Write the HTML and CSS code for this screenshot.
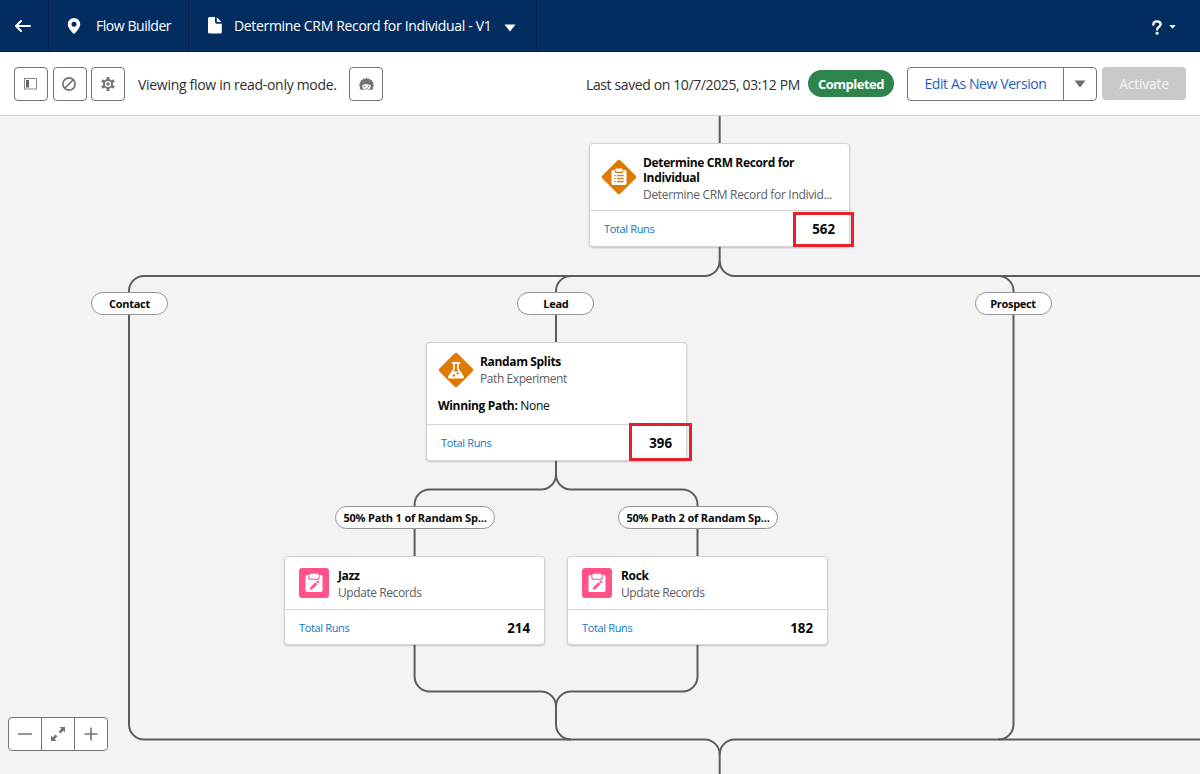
FILE: index.html
```html
<!DOCTYPE html>
<html lang="en">
<head>
    <meta charset="UTF-8">
    <meta name="viewport" content="width=device-width, initial-scale=1.0">
    <title>Flow Builder</title>
    <link rel="stylesheet" href="styles.css">
</head>
<body>
    <!-- shared icons -->
    <svg class="sprite" width="0" height="0">
        <symbol id="update-icon" viewBox="0 0 30 30">
            <rect width="30" height="30" rx="3" fill="#ff538a"/>
            <path d="M8 7h1.300v2.200q0 2.600 2.600 2.600h6.200q2.600 0 2.600-2.600V7H22q1.500 0 1.500 1.500v14q0 1.500-1.500 1.500H8q-1.500 0-1.500-1.500v-14Q6.500 7 8 7z" fill="#fff"/>
            <rect x="10.300" y="5.700" width="9.400" height="5" rx="1.600" fill="#fff"/>
            <path d="M10.700 22l.8-2.900 5-4.800 1.900 1.900-5 4.900zM17.200 13.600l1-1q.6-.4 1.100.1l.7.7q.5.500 0 1.100l-1 1z" fill="#ff538a"/>
        </symbol>
    </svg>

    <header class="topbar">
        <a class="topbar-item back">
            <svg width="18" height="14" viewBox="0 0 18 14" fill="none" stroke="#fff" stroke-width="2" stroke-linecap="round" stroke-linejoin="round"><path d="M16 7H2M7 2L2 7l5 5"/></svg>
        </a>
        <a class="topbar-item builder">
            <svg width="14" height="18" viewBox="0 0 14 18"><path fill="#fff" fill-rule="evenodd" d="M7 1a6.200 6.200 0 0 0-6.200 6.200c0 3.300 3.300 6.800 5.300 9.100q.9 1 1.800 0c2-2.300 5.300-5.800 5.300-9.100A6.200 6.200 0 0 0 7 1zm0 3.800a2.500 2.500 0 1 1 0 5 2.500 2.500 0 0 1 0-5z"/></svg>
            <span class="builder-name">Flow Builder</span>
        </a>
        <a class="topbar-item flow">
            <svg width="14" height="17" viewBox="0 0 14 17" fill="#fff"><path d="M1.500 0H7v5q0 1.800 1.800 1.800h5V15q0 1.500-1.500 1.500H1.500Q0 16.500 0 15V1.500Q0 0 1.500 0z"/><path d="M8.800.3l4.700 4.800H9.300q-.5 0-.5-.5z"/></svg>
            <span class="flow-name">Determine CRM Record for Individual - V1</span>
            <svg class="flow-arrow" width="12" height="8" viewBox="0 0 12 8"><path fill="#fff" d="M.5.500h11L6 7.500z"/></svg>
        </a>
        <a class="help">
            <svg width="10" height="15" viewBox="0 0 10 15"><path d="M1.300 4.700Q1.300 1.300 4.900 1.300q3.700 0 3.700 3 0 1.700-1.800 2.800Q5.100 8.100 5.100 9.700" fill="none" stroke="#fff" stroke-width="2.300" stroke-linecap="round"/><circle cx="5.100" cy="13.300" r="1.500" fill="#fff"/></svg>
            <svg width="7" height="4" viewBox="0 0 7 4"><path fill="#fff" d="M.3 0h6.400L3.500 3.800z"/></svg>
        </a>
    </header>

    <div class="toolbar">
        <div class="tools">
            <button class="btn icon-btn">
                <svg width="14" height="12" viewBox="0 0 14 12"><rect x=".5" y=".5" width="12" height="10.500" fill="none" stroke="#8a8a8a"/><path d="M2 2h3v7.500H2z" fill="#666"/></svg>
            </button>
            <button class="btn icon-btn">
                <svg width="14" height="14" viewBox="0 0 14 14" fill="none" stroke="#747474" stroke-width="1.700"><circle cx="7" cy="7" r="6.100"/><path d="M3 11l8-8"/></svg>
            </button>
            <button class="btn icon-btn">
                <svg width="14" height="14" viewBox="0 0 14 14"><g fill="none" stroke="#747474"><circle cx="7" cy="7" r="4.100" stroke-width="2"/><path stroke-width="2.800" d="M7 0v2.500M7 11.500V14M.9 3.500l2.200 1.250M10.900 9.250l2.200 1.250M.9 10.500l2.200-1.250M10.900 4.750l2.200-1.250"/></g><circle cx="7" cy="7" r="1.700" fill="#747474"/></svg>
            </button>
        </div>
        <span class="mode">Viewing flow in read-only mode.</span>
        <button class="btn icon-btn">
            <svg width="15" height="15" viewBox="0 0 14 14"><path fill="#747474" d="M1.700 12.800L.5 11.500l.6-1.200L0 9l.8-1.300L.4 6.300l1.200-.9.1-1.500 1.600-.2.7-1.400 1.500.4L7 1.700l1.500 1 1.500-.4.7 1.400 1.600.2.100 1.500 1.200.9-.4 1.400.8 1.300-1.100 1.300.6 1.200-1.200 1.300z"/><path fill="#fff" d="M3.200 8.700q1.700-.3 2.500-1.500 1.800 1 5.100 1.100v2q-.4 2.500-3.800 2.500t-3.800-2.500z"/><circle cx="5.200" cy="9.700" r=".7" fill="#747474"/><circle cx="8.800" cy="9.700" r=".7" fill="#747474"/><path d="M5.600 11.200q1.400 1 2.800 0" fill="none" stroke="#747474" stroke-width=".7"/></svg>
        </button>
        <div class="actions">
            <span class="saved">Last saved on 10/7/2025, 03:12 PM</span>
            <span class="status">Completed</span>
            <div class="btn-group">
                <button class="btn edit">Edit As New Version</button>
                <button class="btn more">
                    <svg width="12" height="8" viewBox="0 0 12 8"><path fill="#706e6b" d="M.5.500h11L6 7.500z"/></svg>
                </button>
            </div>
            <button class="activate" disabled>Activate</button>
        </div>
    </div>

    <main class="canvas">
        <!-- connectors -->
        <svg class="lines" width="1200" height="658" viewBox="0 116 1200 658">
            <path d="M719.700 116V143"/>
            <path d="M719.700 247V261a15 15 0 0 1-15 15H144a15 15 0 0 0-15 15V724.500a15 15 0 0 0 15 15H704.700a15 15 0 0 1 15 15V774"/>
            <path d="M719.700 261a15 15 0 0 0 15 15H1200M1200 739.500H734.700a15 15 0 0 0-15 15"/>
            <path d="M571 276a15 15 0 0 0-15 15V343"/>
            <path d="M998.500 276a15 15 0 0 1 15 15V724.500a15 15 0 0 1-15 15"/>
            <path d="M556 461V475a15 15 0 0 1-15 14.500H429.600a15 15 0 0 0-15 15V676.500a15 15 0 0 0 15 15H541a15 15 0 0 1 15 15V724.500a15 15 0 0 0 15 15"/>
            <path d="M556 475a15 15 0 0 0 15 14.500H682.500a15 15 0 0 1 15 15V676.500a15 15 0 0 1-15 15H571a15 15 0 0 0-15 15"/>
        </svg>

        <span class="badge contact">Contact</span>
        <span class="badge lead">Lead</span>
        <span class="badge prospect">Prospect</span>
        <span class="badge path1">50% Path 1 of Randam Sp...</span>
        <span class="badge path2">50% Path 2 of Randam Sp...</span>

        <div class="node decision">
            <div class="node-head">
                <svg class="diamond" width="36" height="36" viewBox="0 0 36 36">
                    <rect x="5.200" y="5.200" width="25.600" height="25.600" rx="2.500" transform="rotate(45 18 18)" fill="#dd7a01"/>
                    <path fill="#fff" d="M12 11h1.700v1.500q0 1.500 1.500 1.500h5.600q1.500 0 1.500-1.500V11H24q1.500 0 1.500 1.500v12q0 1.500-1.500 1.500H12q-1.500 0-1.500-1.500v-12Q10.500 11 12 11z"/>
                    <rect x="14.500" y="9.500" width="7" height="3.300" rx="1" fill="#fff"/>
                    <path stroke="#dd7a01" stroke-width="1.200" d="M13.200 16.700h1.500M16 16.700h6.800M13.200 19.700h1.500M16 19.700h6.800M13.200 22.700h1.500M16 22.700h6.800"/>
                </svg>
                <div class="node-text">
                    <h2>Determine CRM Record for Individual</h2>
                    <p>Determine CRM Record for Individ...</p>
                </div>
            </div>
            <div class="node-foot"><a>Total Runs</a><b>562</b></div>
            <div class="mark"></div>
        </div>

        <div class="node experiment">
            <div class="node-head">
                <svg class="diamond" width="36" height="36" viewBox="0 0 36 36">
                    <rect x="5.200" y="5.200" width="25.600" height="25.600" rx="2.500" transform="rotate(45 18 18)" fill="#dd7a01"/>
                    <path fill="#fff" fill-rule="evenodd" d="M13.800 10h8.400v1.700h-1.400v5.300l4.800 7q1.200 2.500-1.400 2.500H11.800q-2.600 0-1.400-2.500l4.800-7v-5.300h-1.400zM16.800 11.700v5.700l-1.300 2h5l-1.300-2v-5.700z"/>
                    <circle cx="19.600" cy="21.400" r="1.200" fill="#dd7a01"/><circle cx="15.800" cy="23.500" r="1.300" fill="#dd7a01"/>
                </svg>
                <div class="node-text">
                    <h2>Randam Splits</h2>
                    <p>Path Experiment</p>
                </div>
            </div>
            <div class="node-info"><b>Winning Path:</b> None</div>
            <div class="node-foot"><a>Total Runs</a><b>396</b></div>
            <div class="mark"></div>
        </div>

        <div class="node update jazz">
            <div class="node-head">
                <svg width="30" height="30"><use href="#update-icon"/></svg>
                <div class="node-text">
                    <h2>Jazz</h2>
                    <p>Update Records</p>
                </div>
            </div>
            <div class="node-foot"><a>Total Runs</a><b>214</b></div>
        </div>

        <div class="node update rock">
            <div class="node-head">
                <svg width="30" height="30"><use href="#update-icon"/></svg>
                <div class="node-text">
                    <h2>Rock</h2>
                    <p>Update Records</p>
                </div>
            </div>
            <div class="node-foot"><a>Total Runs</a><b>182</b></div>
        </div>

        <div class="zoom">
            <button><svg width="14" height="14" viewBox="0 0 14 14" stroke="#747474" stroke-width="1.600"><path d="M0 7h14"/></svg></button>
            <button><svg width="14" height="14" viewBox="0 0 14 14"><path fill="#747474" d="M8.500 0H14v5.500l-1.800-1.800-2.800 2.800-1.700-1.700 2.600-3zM5.500 14H0V8.500l1.800 1.800 2.800-2.800 1.700 1.700-2.600 3z"/></svg></button>
            <button><svg width="14" height="14" viewBox="0 0 14 14" stroke="#747474" stroke-width="1.600"><path d="M.5 7h13M7 .5v13"/></svg></button>
        </div>
    </main>
</body>
</html>
```

FILE: styles.css
```css
*{
    padding: 0;
    margin: 0;
    box-sizing: border-box;
}
body{
    display: flex;
    flex-direction: column;
    width: 1200px;
    height: 774px;
    overflow: hidden;
    font-family: "Open Sans", "Noto Sans", sans-serif;
    font-size: 14px;
    color: #2e2e2e;
}
svg{
    display: block;
    flex-shrink: 0;
}
button{
    font: inherit;
}
.sprite{
    position: absolute;
}

/* top bar */
.topbar{
    display: flex;
    height: 52px;
    background-color: #032d60;
    border-bottom: 1px solid #03234d;
    color: #fff;
}
.topbar-item{
    display: flex;
    align-items: center;
    border-right: 1px solid #031f45;
}
.back{
    width: 49px;
    padding-left: 14px;
}
.builder{
    width: 140px;
    padding-left: 18px;
    gap: 15px;
}
.flow{
    width: 348px;
    padding-left: 19px;
    gap: 12px;
}
.builder-name{
    letter-spacing: -0.45px;
}
.flow-name{
    width: 258px;
    white-space: nowrap;
    letter-spacing: -0.33px;
}
.flow-arrow{
    margin-top: 4px;
}
.help{
    display: flex;
    align-items: center;
    gap: 7px;
    margin-left: auto;
    padding: 3px 24px 0 0;
}

/* toolbar */
.toolbar{
    display: flex;
    align-items: center;
    height: 64px;
    padding: 0 14px;
    background-color: #fff;
    border-bottom: 1px solid #d4d4d4;
}
.tools{
    display: flex;
    gap: 4.500px;
}
.btn{
    display: flex;
    align-items: center;
    justify-content: center;
    height: 34px;
    background-color: #fff;
    border: 1px solid #747474;
    border-radius: 4px;
}
.icon-btn{
    width: 34px;
}
.tools .icon-btn{
    padding-right: 1px;
}
.mode{
    width: 211px;
    margin-left: 13px;
    padding-top: 2px;
    white-space: nowrap;
    letter-spacing: -0.3px;
}
.actions{
    display: flex;
    align-items: center;
    margin-left: auto;
}
.saved{
    width: 222px;
    padding-top: 2px;
    white-space: nowrap;
    letter-spacing: -0.38px;
}
.status{
    display: flex;
    align-items: center;
    justify-content: center;
    width: 86px;
    height: 27px;
    margin-right: 13px;
    border-radius: 14px;
    background-color: #2e844a;
    color: #fff;
    font-size: 13px;
    font-weight: bold;
    letter-spacing: -0.5px;
}
.btn-group{
    display: flex;
    margin-right: 5px;
}
.edit{
    width: 157px;
    border-radius: 4px 0 0 4px;
    color: #1b5fc1;
    letter-spacing: -0.4px;
}
.more{
    width: 34px;
    margin-left: -1px;
    border-radius: 0 4px 4px 0;
}
.activate{
    width: 84px;
    height: 33px;
    border: none;
    border-radius: 4px;
    background-color: #c9c9c9;
    color: #f3f3f3;
    letter-spacing: -0.25px;
}

/* canvas */
.canvas{
    position: relative;
    flex: 1;
    background-color: #f3f3f3;
}
.lines{
    fill: none;
    stroke: #5c5c5c;
    stroke-width: 2;
}
.badge{
    position: absolute;
    display: flex;
    align-items: center;
    justify-content: center;
    width: 77px;
    height: 23px;
    background-color: #fff;
    border: 1px solid #939393;
    border-radius: 12px;
    color: #080808;
    font-size: 11px;
    font-weight: bold;
    white-space: nowrap;
    letter-spacing: -0.3px;
}
.contact{
    left: 91px;
    top: 176px;
}
.lead{
    left: 517.400px;
    top: 176px;
}
.prospect{
    left: 974.500px;
    top: 176px;
}
.path1,
.path2{
    top: 390px;
    width: 160px;
    letter-spacing: -0.17px;
}
.path1{
    left: 335px;
}
.path2{
    left: 618px;
}

.node{
    position: absolute;
    display: flex;
    flex-direction: column;
    width: 261px;
    background-color: #fff;
    border: 1px solid #d4d4d4;
    border-radius: 4px;
    box-shadow: 0 1px 2px rgba(0, 0, 0, 0.2);
    color: #080808;
    font-size: 12px;
}
.node-head{
    display: flex;
    flex: 1;
    gap: 6px;
    padding: 11px 11px 0;
}
.diamond{
    margin-top: -2px;
}
.node-text{
    min-width: 0;
    white-space: nowrap;
}
.node h2{
    font-size: 12px;
    line-height: 15px;
    letter-spacing: -0.35px;
    white-space: normal;
}
.node p{
    margin-top: 1px;
    line-height: 17px;
    color: #5c5c5c;
    letter-spacing: -0.42px;
}
.node-foot{
    display: flex;
    align-items: center;
    justify-content: space-between;
    height: 36px;
    padding: 0 14px;
    border-top: 1px solid #d4d4d4;
}
.node-foot a{
    color: #0b76c9;
    font-size: 11px;
    letter-spacing: -0.35px;
}
.node-foot b{
    padding-top: 2px;
    font-size: 13.300px;
}
.decision{
    left: 589px;
    top: 26.500px;
    height: 104px;
}
.decision .diamond{
    margin-top: 4px;
}
.decision p{
    letter-spacing: -0.32px;
}
.experiment{
    left: 426px;
    top: 226px;
    height: 119px;
}
.experiment .node-foot b{
    padding-top: 0;
}
.node-info{
    padding: 0 11px 10px;
    line-height: 17px;
    letter-spacing: -0.33px;
}
.update{
    top: 440px;
    height: 89px;
}
.update .node-head{
    gap: 9px;
    padding: 11px 14px 0;
}
.update .node-foot{
    height: 35px;
}
.jazz{
    left: 284px;
}
.rock{
    left: 567px;
}

/* run count highlight */
.mark{
    position: absolute;
    right: -5px;
    bottom: -1px;
    width: 61px;
    height: 35px;
    border: 3px solid #e3202b;
}
.experiment .mark{
    right: -6px;
    width: 63px;
    height: 38px;
}

.zoom{
    position: absolute;
    left: 8px;
    top: 601px;
    display: flex;
    width: 100px;
    height: 34px;
    background-color: #fff;
    border: 1px solid #747474;
    border-radius: 4px;
    overflow: hidden;
}
.zoom button{
    display: flex;
    flex: 1;
    align-items: center;
    justify-content: center;
    background: none;
    border: none;
}
.zoom button + button{
    border-left: 1px solid #747474;
}
```
